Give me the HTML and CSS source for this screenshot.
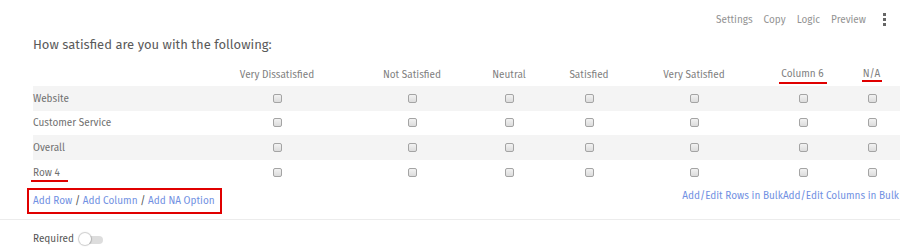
FILE: index.html
```html
<!DOCTYPE html>
<html>
<head>
<meta charset="utf-8">
<link rel="stylesheet" href="styles.css">
</head>
<body>
<div class="page">
  <div class="toolbar">
    <span class="tool">Settings</span>
    <span class="tool">Copy</span>
    <span class="tool">Logic</span>
    <span class="tool">Preview</span>
    <span class="kebab"><i></i><i></i><i></i></span>
  </div>
  <div class="title">How satisfied are you with the following:</div>
  <div class="matrix">
    <div class="row head">
      <div class="label"></div>
      <div class="cell">Very Dissatisfied</div>
      <div class="cell">Not Satisfied</div>
      <div class="cell">Neutral</div>
      <div class="cell">Satisfied</div>
      <div class="cell">Very Satisfied</div>
      <div class="cell"><span class="mark mark-col">Column 6</span></div>
      <div class="cell"><span class="mark mark-na">N/A</span></div>
    </div>
    <div class="row shade">
      <div class="label">Website</div>
      <div class="cell"><span class="cb"></span></div>
      <div class="cell"><span class="cb"></span></div>
      <div class="cell"><span class="cb"></span></div>
      <div class="cell"><span class="cb"></span></div>
      <div class="cell"><span class="cb"></span></div>
      <div class="cell"><span class="cb"></span></div>
      <div class="cell"><span class="cb"></span></div>
    </div>
    <div class="row">
      <div class="label">Customer Service</div>
      <div class="cell"><span class="cb"></span></div>
      <div class="cell"><span class="cb"></span></div>
      <div class="cell"><span class="cb"></span></div>
      <div class="cell"><span class="cb"></span></div>
      <div class="cell"><span class="cb"></span></div>
      <div class="cell"><span class="cb"></span></div>
      <div class="cell"><span class="cb"></span></div>
    </div>
    <div class="row shade">
      <div class="label">Overall</div>
      <div class="cell"><span class="cb"></span></div>
      <div class="cell"><span class="cb"></span></div>
      <div class="cell"><span class="cb"></span></div>
      <div class="cell"><span class="cb"></span></div>
      <div class="cell"><span class="cb"></span></div>
      <div class="cell"><span class="cb"></span></div>
      <div class="cell"><span class="cb"></span></div>
    </div>
    <div class="row">
      <div class="label"><span class="mark mark-row">Row 4</span></div>
      <div class="cell"><span class="cb"></span></div>
      <div class="cell"><span class="cb"></span></div>
      <div class="cell"><span class="cb"></span></div>
      <div class="cell"><span class="cb"></span></div>
      <div class="cell"><span class="cb"></span></div>
      <div class="cell"><span class="cb"></span></div>
      <div class="cell"><span class="cb"></span></div>
    </div>
  </div>
  <div class="actions">
    <div class="addbox"><a class="link">Add Row</a> <span class="sep">/</span> <a class="link">Add Column</a> <span class="sep">/</span> <a class="link">Add NA Option</a></div>
    <div class="bulk"><a class="link">Add/Edit Rows in Bulk</a><a class="link">Add/Edit Columns in Bulk</a></div>
  </div>
  <div class="footer">
    <span class="req">Required</span>
    <span class="toggle"><span class="knob"></span></span>
  </div>
</div>
</body>
</html>
```

FILE: styles.css
```css
html, body {
  margin: 0;
  padding: 0;
  background: #fff;
}
body {
  font-family: "Fira Sans", Roboto, "Liberation Sans", sans-serif;
  color: #666;
}
.page {
  width: 900px;
}
.toolbar {
  display: flex;
  justify-content: flex-end;
  align-items: center;
  height: 39px;
  padding-right: 12px;
  gap: 11px;
  font-size: 10px;
  color: #939393;
}
.kebab {
  display: flex;
  flex-direction: column;
  gap: 2px;
  margin-left: 4px;
  padding: 0 2px;
}
.kebab i {
  display: block;
  width: 3px;
  height: 3px;
  background: #666;
}
.title {
  padding-left: 33px;
  font-size: 13px;
  color: #5a5a5a;
  height: 16px;
  line-height: 16px;
  margin-top: -2px;
}
.matrix {
  margin-left: 33px;
  margin-top: 9px;
}
.row {
  display: grid;
  grid-template-columns: 163px 162px 108px 86px 74px 136px 82px 56px;
  height: 24.67px;
  align-items: center;
  font-size: 10px;
}
.row.head {
  height: 24px;
  color: #808080;
  padding-top: 1px;
  box-sizing: border-box;
}
.row.shade {
  background: #f4f4f4;
}
.label {
  color: #707070;
  padding-top: 1px;
}
.cell {
  text-align: center;
  display: flex;
  justify-content: center;
  align-items: center;
}
.cb {
  display: block;
  width: 7px;
  height: 7px;
  border: 1px solid #a4a4a4;
  border-radius: 2px;
  background: linear-gradient(#f2f2f2, #dcdcdc);
}
.mark {
  border-bottom: 2px solid #e00000;
  padding-bottom: 2px;
}
.mark-col {
  padding-left: 2px;
  padding-right: 3px;
  position: relative;
  top: 1px;
}
.mark-na {
  padding-left: 1px;
  padding-right: 2px;
  padding-bottom: 0px;
}
.mark-row {
  margin-left: -2px;
  padding-left: 2px;
  padding-right: 8px;
  padding-bottom: 1px;
}
.actions {
  display: flex;
  justify-content: space-between;
  align-items: flex-start;
  padding-left: 27px;
  padding-right: 1px;
  margin-top: 3px;
  height: 26px;
  font-size: 10px;
}
.addbox {
  border: 2px solid #e00000;
  padding: 4px 5px 4px 4px;
  line-height: 14px;
  height: 14px;
  color: #555;
}
.link {
  color: #7090e2;
  text-decoration: none;
}
.sep {
  color: #555;
}
.bulk {
  line-height: 14px;
  padding-top: 1px;
}
.footer {
  border-top: 1px solid #ececec;
  margin-top: 5px;
  height: 38px;
  display: flex;
  align-items: center;
  padding-left: 33px;
  font-size: 10px;
  color: #555;
}
.req {
  margin-right: 5px;
}
.toggle {
  position: relative;
  display: block;
  width: 22px;
  height: 8px;
  border-radius: 4px;
  background: #ddd;
  margin-left: 2px;
  top: 1px;
}
.knob {
  position: absolute;
  left: -2px;
  top: -3px;
  width: 12px;
  height: 12px;
  border-radius: 50%;
  background: #fff;
  box-shadow: 0 0 1px 1px rgba(0,0,0,0.2);
}
```
